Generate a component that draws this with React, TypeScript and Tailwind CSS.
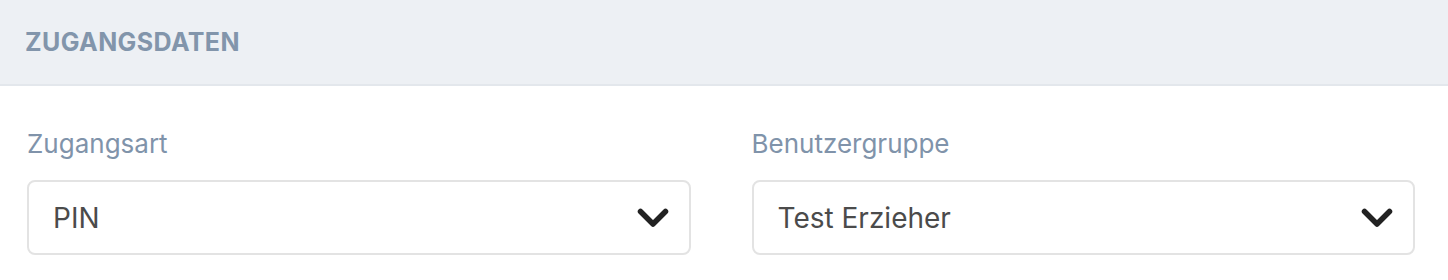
export default function App() {
  const fields = [
    { label: 'Zugangsart', value: 'PIN' },
    { label: 'Benutzergruppe', value: 'Test Erzieher' },
  ]

  return (
    <div className="w-[1448px] h-[280px] bg-white font-['Inter','Noto_Sans',sans-serif]">
      <div className="h-[86px] bg-[#edf0f4] border-b-2 border-[#e3e7ec] flex items-center px-[25px]">
        <h2 className="text-[25px] tracking-[0.4px] font-bold text-[#8295ab] uppercase leading-none">Zugangsdaten</h2>
      </div>
      <div className="grid grid-cols-2 gap-x-[61px] pl-[27px] pr-[33px] pt-[38px]">
        {fields.map((f) => (
          <div key={f.label} className="flex flex-col gap-4">
            <label className="text-[26px] leading-[40px] text-[#8093aa]">{f.label}</label>
            <div className="h-[75px] rounded-lg border-2 border-[#e3e3e3] flex items-center justify-between pl-[24px] pr-[20px]">
              <span className="text-[28px] text-[#4b4b4b]">{f.value}</span>
              <svg width="32" height="20" viewBox="0 0 32 20" fill="none">
                <polyline
                  points="3.5,3.5 16,16 28.5,3.5"
                  stroke="#222"
                  strokeWidth="5.5"
                  strokeLinecap="round"
                  strokeLinejoin="round"
                />
              </svg>
            </div>
          </div>
        ))}
      </div>
    </div>
  )
}
